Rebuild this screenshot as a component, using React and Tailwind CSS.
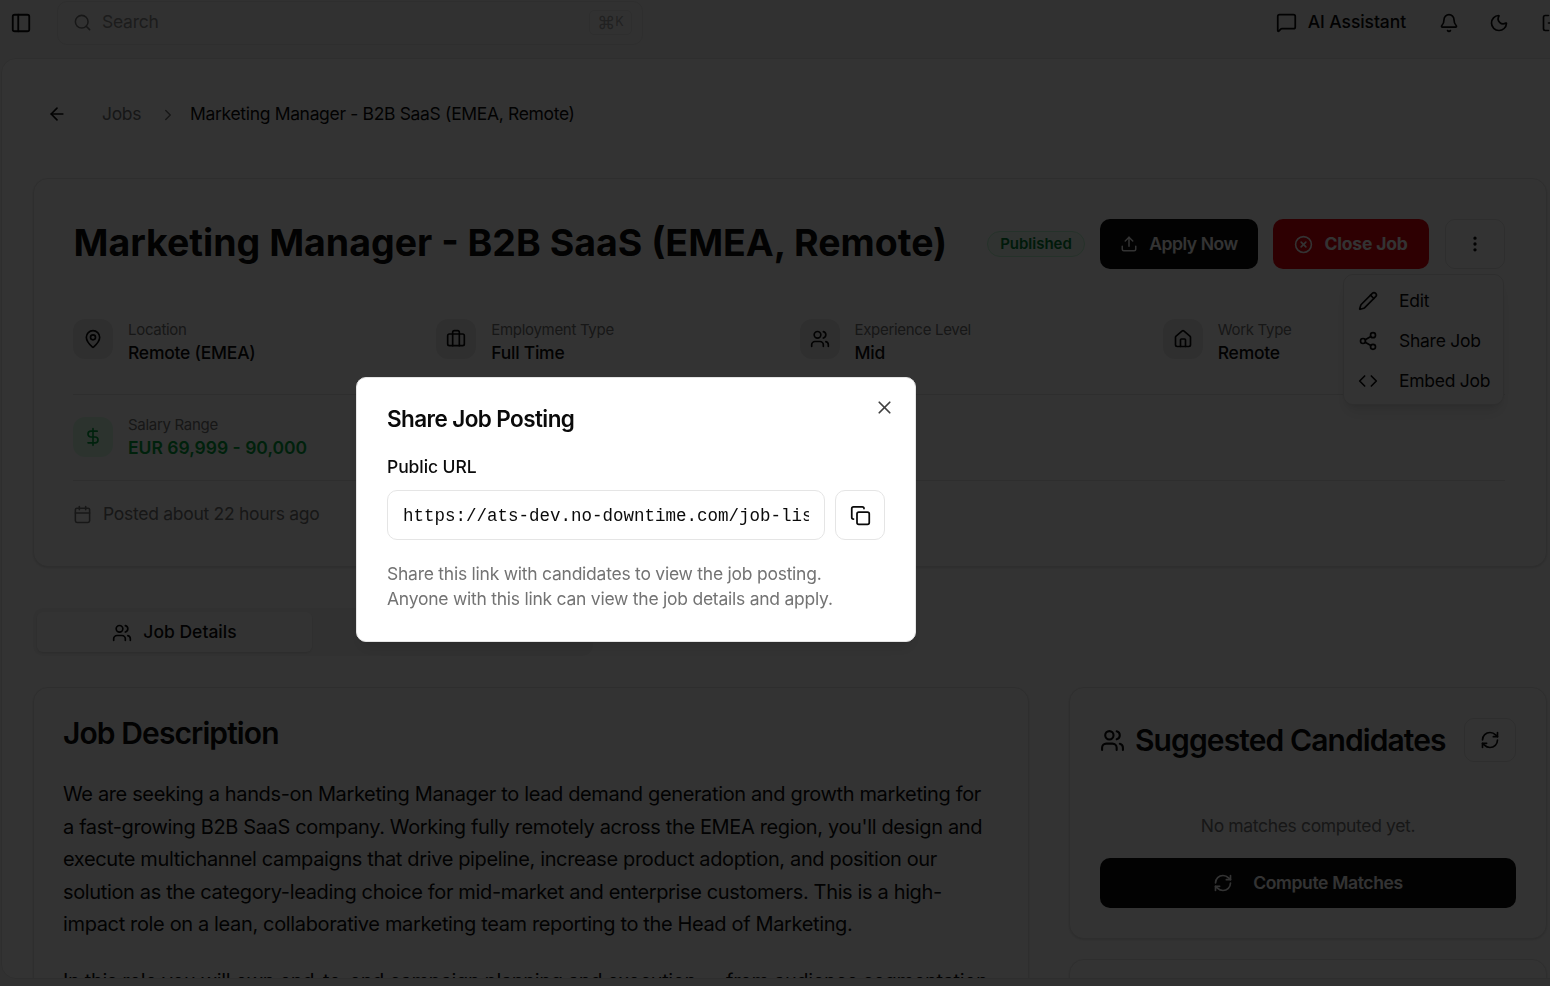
import {
  ArrowLeft,
  Bell,
  Briefcase,
  Calendar,
  ChevronRight,
  CircleX,
  Code,
  Copy,
  DollarSign,
  EllipsisVertical,
  House,
  LogOut,
  MapPin,
  MessageSquare,
  Moon,
  PanelLeft,
  Pencil,
  RefreshCw,
  Search,
  Share2,
  Upload,
  Users,
  X,
} from "lucide-react";

const infoItems = [
  { icon: MapPin, label: "Location", value: "Remote (EMEA)" },
  { icon: Briefcase, label: "Employment Type", value: "Full Time" },
  { icon: Users, label: "Experience Level", value: "Mid" },
  { icon: House, label: "Work Type", value: "Remote" },
];

const menuItems = [
  { icon: Pencil, label: "Edit" },
  { icon: Share2, label: "Share Job" },
  { icon: Code, label: "Embed Job" },
];

function TopBar() {
  return (
    <header className="flex h-[58px] shrink-0 items-center pr-[18px] pb-[13px]">
      <PanelLeft className="ml-[10px] size-[22px] text-[#0a0a0a]" strokeWidth={2} />
      <div className="ml-[25px] flex h-[44px] w-[586px] items-center rounded-[10px] border border-[#e3e3e3] pl-[15px] pr-[10px]">
        <Search className="size-[19px] text-[#737373]" />
        <span className="ml-[10px] text-[17.5px] tracking-[-0.015em] text-[#8a8a8a]">Search</span>
        <span className="ml-auto flex h-[25px] w-[43px] items-center justify-center rounded-[5px] border border-[#e3e3e3] text-[#a3a3a3]">
          <span className="text-[18px] leading-none">⌘</span>
          <span className="text-[12.5px] leading-none">K</span>
        </span>
      </div>
      <div className="ml-auto flex items-center">
        <MessageSquare className="size-[21px] text-[#0a0a0a]" />
        <span className="ml-[11px] text-[17.5px] font-medium tracking-[-0.005em] text-[#0a0a0a]">AI Assistant</span>
        <Bell className="ml-[33px] size-[20px] text-[#0a0a0a]" />
        <Moon className="ml-[30px] size-[20px] text-[#0a0a0a]" />
        <LogOut className="ml-[32px] size-[20px] text-[#0a0a0a]" />
      </div>
    </header>
  );
}

function JobCard() {
  return (
    <section className="rounded-[15px] border border-[#e5e5e5] bg-white pt-[40px] pr-[41px] pb-[41px] pl-[39px] shadow-sm">
      <div className="flex h-[50px] items-center">
        <h1 className="mb-[3px] w-[873px] pl-[0.5px] text-[37.5px] leading-[50px] font-bold whitespace-nowrap text-[#0a0a0a]">
          Marketing Manager - B2B SaaS (EMEA, Remote)
        </h1>
        <span className="ml-[41px] flex h-[26px] w-[98px] items-center justify-center rounded-full border border-[#b9f8cf] bg-[#f0fdf4] text-[15px] font-semibold text-[#008236]">
          Published
        </span>
        <button className="ml-[15px] flex h-[50px] w-[158px] items-center justify-center gap-[11px] rounded-[10px] bg-[#0a0a0a] text-[17.5px] font-semibold tracking-[-0.025em] text-white">
          <Upload className="size-[18px]" />
          Apply Now
        </button>
        <button className="ml-[15px] flex h-[50px] w-[156px] items-center justify-center gap-[11px] rounded-[10px] bg-red-600 text-[17.5px] font-bold tracking-[-0.01em] text-white">
          <CircleX className="size-[19px]" />
          Close Job
        </button>
        <div className="relative ml-[16px]">
          <button className="flex h-[50px] w-[60px] items-center justify-center rounded-[10px] border border-[#e5e5e5] text-[#0a0a0a]">
            <EllipsisVertical className="size-[20px]" />
          </button>
          <div className="absolute top-[55px] right-[1px] w-[161px] rounded-[10px] border border-[#e5e5e5] bg-white pt-[6px] pb-[3px] shadow-lg">
            {menuItems.map(({ icon: Icon, label }) => (
              <div key={label} className="flex h-[40px] items-center pl-[14px] text-[17.5px] tracking-[-0.015em] text-[#0a0a0a]">
                <Icon className="size-[20px]" />
                <span className="ml-[21px] whitespace-nowrap">{label}</span>
              </div>
            ))}
          </div>
        </div>
      </div>

      <div className="mt-[50px] grid grid-cols-4 gap-x-[21px] border-b border-[#e5e5e5] pb-[35px]">
        {infoItems.map(({ icon: Icon, label, value }) => (
          <div key={label} className="flex h-[40px] items-start gap-[15px]">
            <div className="flex size-[40px] items-center justify-center rounded-[12px] bg-[#ebebeb]">
              <Icon className="size-[20px] text-[#0a0a0a]" />
            </div>
            <div className="mt-[1px]">
              <div className="text-[15px] leading-[20px] tracking-[-0.02em] text-[#737373]">{label}</div>
              <div className="mt-[1px] text-[17.5px] leading-[24px] font-medium tracking-[-0.014em] text-[#0a0a0a]">{value}</div>
            </div>
          </div>
        ))}
      </div>

      <div className="mt-[22px] flex h-[64px] items-start gap-[15px] border-b border-[#e5e5e5]">
        <div className="flex size-[40px] items-center justify-center rounded-[12px] bg-green-100">
          <DollarSign className="size-[20px] text-green-600" />
        </div>
        <div className="-mt-[2px]">
          <div className="text-[15px] leading-[20px] tracking-[-0.02em] text-[#737373]">Salary Range</div>
          <div className="mt-[1px] text-[17.5px] leading-[24px] font-semibold text-green-600">EUR 69,999 - 90,000</div>
        </div>
      </div>

      <div className="mt-[22px] flex h-[22px] items-center text-[17.5px] tracking-[-0.016em] text-[#737373]">
        <Calendar className="size-[19px]" />
        <span className="ml-[11px]">Posted about 22 hours ago</span>
      </div>
    </section>
  );
}

function DescriptionCard() {
  return (
    <section className="h-[340px] w-[996px] shrink-0 rounded-t-[15px] border border-[#e5e5e5] bg-white px-[29px] pt-[25px] shadow-sm">
      <h2 className="text-[30px] leading-[40px] font-semibold tracking-[-0.03em] text-[#0a0a0a]">Job Description</h2>
      <p className="mt-[25px] max-w-[925px] text-[20px] leading-[32.5px] tracking-[-0.018em] text-[#0a0a0a]">
        We are seeking a hands-on Marketing Manager to lead demand generation and growth marketing for a fast-growing
        B2B SaaS company. Working fully remotely across the EMEA region, you'll design and execute multichannel
        campaigns that drive pipeline, increase product adoption, and position our solution as the category-leading
        choice for mid-market and enterprise customers. This is a high-impact role on a lean, collaborative marketing
        team reporting to the Head of Marketing.
      </p>
      <p className="mt-[24px] text-[20px] leading-[32.5px] tracking-[-0.018em] whitespace-nowrap text-[#0a0a0a]">
        In this role you will own end-to-end campaign planning and execution — from audience segmentation
      </p>
    </section>
  );
}

function CandidatesCard() {
  return (
    <div className="flex w-[478px] shrink-0 flex-col gap-[20px]">
      <section className="h-[252px] rounded-[15px] border border-[#e5e5e5] bg-white px-[30px] pt-[30px] shadow-sm">
        <div className="flex items-center justify-between">
          <div className="flex items-center gap-[10px]">
            <Users className="size-[25px] text-[#0a0a0a]" />
            <h2 className="text-[30px] leading-[44px] font-semibold tracking-[-0.03em] whitespace-nowrap text-[#0a0a0a]">Suggested Candidates</h2>
          </div>
          <button className="flex h-[44px] w-[52px] items-center justify-center rounded-[10px] border border-[#e5e5e5] text-[#0a0a0a]">
            <RefreshCw className="size-[20px]" />
          </button>
        </div>
        <p className="mt-[52px] text-center text-[17.5px] leading-[24px] tracking-[-0.02em] text-[#737373]">No matches computed yet.</p>
        <button className="mt-[20px] flex h-[50px] w-full items-center justify-center gap-[20px] rounded-[10px] bg-[#0a0a0a] text-[17.5px] font-semibold tracking-[-0.02em] text-white">
          <RefreshCw className="size-[20px]" />
          Compute Matches
        </button>
      </section>
      <section className="h-[60px] rounded-t-[15px] border border-[#e5e5e5] bg-white shadow-sm" />
    </div>
  );
}

function ShareDialog() {
  return (
    <div className="fixed inset-0 bg-black/80">
      <div className="absolute top-[377px] left-[356px] w-[560px] rounded-[10px] border border-[#e5e5e5] bg-white px-[30px] pt-[29px] pb-[30px] shadow-lg">
        <button className="absolute top-[19px] right-[20px] text-[#404040]">
          <X className="size-[21px]" />
        </button>
        <h3 className="text-[22.5px] leading-[23px] font-semibold tracking-[-0.026em] text-[#0a0a0a]">Share Job Posting</h3>
        <label className="mt-[28px] block text-[17.5px] leading-[18px] font-medium tracking-[-0.005em] text-[#0a0a0a]">Public URL</label>
        <div className="mt-[14px] flex gap-[10px]">
          <div className="flex h-[50px] w-[438px] items-center overflow-hidden rounded-[10px] border border-[#e5e5e5] px-[15px] pt-[3px]">
            <span className="overflow-hidden font-['Liberation_Mono',monospace] text-[17.5px] whitespace-nowrap text-[#0a0a0a]">
              https://ats-dev.no-downtime.com/job-listings/marketing-manager
            </span>
          </div>
          <button className="flex size-[50px] items-center justify-center rounded-[10px] border border-[#e5e5e5] text-[#0a0a0a]">
            <Copy className="size-[21px]" />
          </button>
        </div>
        <p className="mt-[21px] text-[17.5px] leading-[25px] tracking-[-0.014em] text-[#737373]">
          Share this link with candidates to view the job posting.
          <br />
          Anyone with this link can view the job details and apply.
        </p>
      </div>
    </div>
  );
}

export default function App() {
  return (
    <div className="h-screen w-full overflow-hidden bg-[#f5f5f5] font-['Inter',sans-serif]">
      <div className="flex h-full w-[1579px] flex-col">
        <TopBar />
        <main className="mb-[7px] ml-[1px] flex-1 overflow-hidden rounded-[15px] border border-[#e5e5e5] bg-white px-[31px]">
          <nav className="flex h-[119px] items-center pb-[8px] text-[17.5px] tracking-[-0.019em]">
            <ArrowLeft className="mb-[2px] ml-[14px] size-[20px] text-[#0a0a0a]" />
            <span className="ml-[35px] text-[#737373]">Jobs</span>
            <ChevronRight className="mr-[13px] ml-[18px] size-[18px] text-[#737373]" />
            <span className="text-[#0a0a0a]">Marketing Manager - B2B SaaS (EMEA, Remote)</span>
          </nav>
          <JobCard />
          <div className="mt-[41px] flex h-[48px] w-[560px] items-center rounded-[10px] bg-[#f5f5f5] p-[4px]">
            <div className="flex h-[40px] w-[275px] items-center justify-center gap-[11px] rounded-[6px] bg-white pt-[1px] text-[17.5px] font-medium text-[#0a0a0a] shadow-sm">
              <Users className="size-[20px]" />
              Job Details
            </div>
          </div>
          <div className="mt-[31px] flex gap-[40px]">
            <DescriptionCard />
            <CandidatesCard />
          </div>
        </main>
      </div>
      <ShareDialog />
    </div>
  );
}
